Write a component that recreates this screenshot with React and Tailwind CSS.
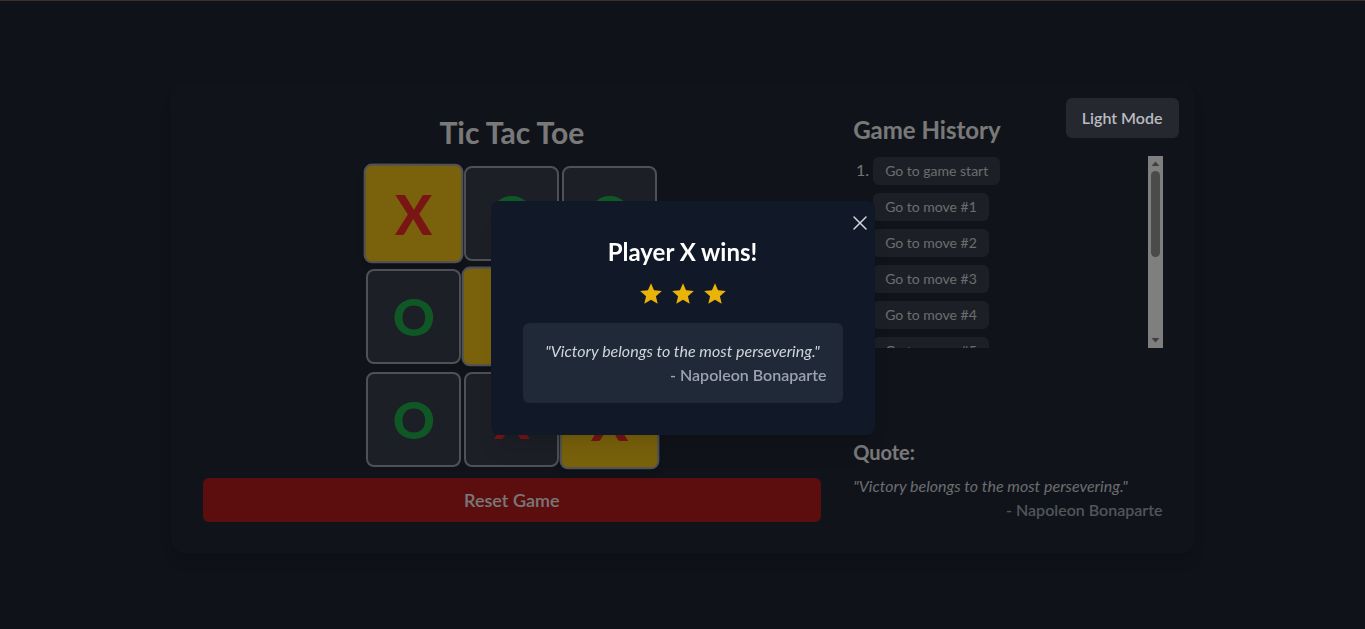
import React from "react";
import { X } from "lucide-react";
import { MdStar } from "react-icons/md";

const board = [
  ["X", "O", "O"],
  ["O", "X", "X"],
  ["O", "X", "X"],
];
const winning = [0, 4, 8];

function Cell({ value, win }) {
  return (
    <div
      className={
        "w-[95px] h-[95px] rounded-lg border-2 border-[#9ca3af] flex items-center justify-center text-[52px] font-black leading-none " +
        (win ? "bg-[#f5c518] scale-105 shadow-md" : "bg-[#383f4c]") +
        (value === "X" ? " text-[#f22a2a]" : " text-[#1fb14a]")
      }
    >
      {value}
    </div>
  );
}

function FakeScrollbar() {
  return (
    <div className="w-[15px] h-full bg-[#fefefe] flex flex-col items-center shrink-0">
      <svg width="15" height="15" viewBox="0 0 15 15" className="shrink-0">
        <path d="M3.5 10 L7.5 5.5 L11.5 10 Z" fill="#808080" />
      </svg>
      <div className="w-[9px] h-[86px] bg-[#969696] rounded-full" />
      <div className="flex-1" />
      <svg width="15" height="15" viewBox="0 0 15 15" className="shrink-0">
        <path d="M3.5 5 L7.5 9.5 L11.5 5 Z" fill="#808080" />
      </svg>
    </div>
  );
}

export default function App() {
  const moves = ["Go to game start"];
  for (let i = 1; i <= 9; i++) moves.push("Go to move #" + i);

  return (
    <div className="min-h-screen bg-[#1f2432] flex items-center justify-center relative pt-[6px] font-['Lato',sans-serif]">
      <div className="fixed top-0 inset-x-0 h-px bg-[#3b2f2b] z-50" />
      <div className="relative w-full max-w-5xl bg-[#212634] rounded-2xl shadow-lg p-8 grid grid-cols-[2fr_1fr] gap-8">
        <button className="absolute top-4 right-4 z-50 bg-[#25282f] text-[#b9bcc1] font-semibold text-base px-4 py-2 rounded-md">
          Light Mode
        </button>

        <div className="flex flex-col">
          <h1 className="text-3xl font-bold text-center text-[#f2f2f2] mb-4">Tic Tac Toe</h1>
          <div className="grid grid-cols-[95px_95px_95px] gap-x-[3px] gap-y-2 mx-auto">
            {board.flat().map((v, i) => (
              <Cell key={i} value={v} win={winning.includes(i)} />
            ))}
          </div>
          <button className="mt-[11px] w-full bg-[#b91c1c] text-[#f0f0f0] text-lg font-semibold py-2 rounded-md">
            Reset Game
          </button>
        </div>

        <div className="flex flex-col">
          <h2 className="text-2xl font-bold text-[#f2f2f2] mb-2.5">Game History</h2>
          <div className="h-48 flex">
            <div className="flex-1 overflow-hidden">
              <ol className="list-decimal pl-5 text-[#e5e7eb] marker:text-[#e5e7eb] pt-px">
                {moves.map((m) => (
                  <li key={m} className="mb-2">
                    <button className="bg-[#383f4c] text-[#d6d8dc] text-sm px-3 py-1 rounded-md">{m}</button>
                  </li>
                ))}
              </ol>
            </div>
            <FakeScrollbar />
          </div>
          <div className="mt-auto">
            <h3 className="text-xl font-bold text-[#f2f2f2] mb-2">Quote:</h3>
            <p className="italic text-[#d6d8dc]">"Victory belongs to the most persevering."</p>
            <p className="text-right font-semibold text-[#a3a9b3]">- Napoleon Bonaparte</p>
          </div>
        </div>
      </div>

      <div className="fixed inset-0 bg-black/50 z-40 flex items-center justify-center pt-[6px]">
        <div className="relative w-96 bg-[#111827] rounded-lg p-8 shadow-xl">
          <button className="absolute top-2.5 right-[3px] text-[#d1d5db]">
            <X size={24} strokeWidth={1.5} />
          </button>
          <h2 className="text-2xl font-bold text-white text-center pt-[3px] -mb-[3px]">Player X wins!</h2>
          <div className="flex justify-center gap-[6px] mt-4 text-[#eab308]">
            <MdStar size={26} />
            <MdStar size={26} />
            <MdStar size={26} />
          </div>
          <div className="mt-4 bg-[#1f2937] rounded-md p-4">
            <p className="italic text-[#d1d5db] text-center">"Victory belongs to the most persevering."</p>
            <p className="text-right font-semibold text-[#9ca3af]">- Napoleon Bonaparte</p>
          </div>
        </div>
      </div>
    </div>
  );
}
